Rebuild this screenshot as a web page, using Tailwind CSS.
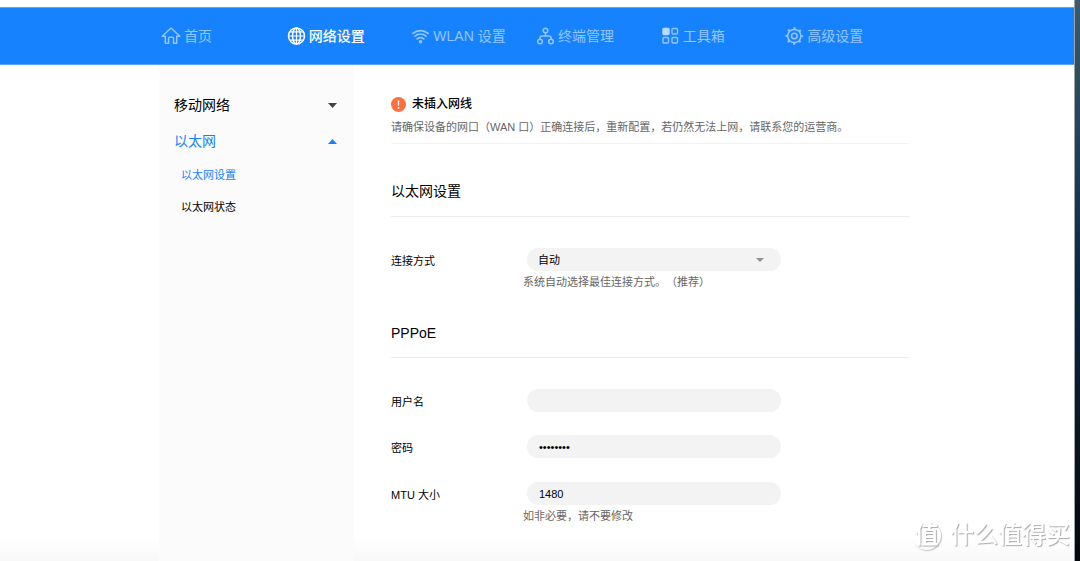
<!DOCTYPE html>
<html lang="zh-CN">
<head>
<meta charset="utf-8">
<meta name="viewport" content="width=device-width, initial-scale=1">
<title>以太网设置</title>
<script src="https://cdn.jsdelivr.net/npm/@tailwindcss/browser@4"></script>
</head>
<body class="flex min-h-screen bg-white font-['Liberation_Sans','Noto_Sans_CJK_SC',sans-serif] text-[11px] leading-4 text-black">
  <div class="flex min-w-0 grow flex-col bg-linear-to-t from-[#f8f8f8] to-white to-[24px] pt-[7px]">
    <header class="border-t border-b border-[#5ba4f8] bg-[#1782fd]">
      <nav aria-label="主导航" class="mx-auto grid h-14 max-w-[756px] grid-cols-6 items-center pr-[6px] pl-[2px] text-sm leading-5 whitespace-nowrap text-[#94c6ff]">
        <a href="#" class="flex items-center gap-[3px]">
          <svg class="size-5 shrink-0" viewBox="0 0 20 20" fill="none" stroke="currentColor" stroke-width="1.5" stroke-linejoin="round" stroke-linecap="round" aria-hidden="true"><path d="M4.3 10.2H1.2L10 2l8.8 8.2h-3.1v7.1h-3.2v-5.1c0-.7-.4-1-1-1H8.600c-.6 0-1 .3-1 1v5.100H4.300z"/></svg>
          首页</a>
        <a href="#" aria-current="page" class="flex items-center gap-[3px] font-medium text-white">
          <svg class="size-5 shrink-0" viewBox="0 0 20 20" fill="none" stroke="currentColor" stroke-width="1.5" aria-hidden="true"><circle cx="10.500" cy="10" r="8"/><ellipse cx="10.500" cy="10" rx="4" ry="8"/><path d="M10.500 2v16M2.500 10h16M3.800 5.800h13.400M3.800 14.200h13.400" stroke-width="1.200"/></svg>
          网络设置</a>
        <a href="#" class="flex items-center gap-[3px]">
          <svg class="size-5 shrink-0" viewBox="0 0 20 20" fill="none" stroke="currentColor" stroke-width="1.700" stroke-linecap="round" aria-hidden="true"><path d="M2.900 7.400c4.500-3.800 10.700-3.800 15.200 0M5 10.200c3.300-2.800 7.700-2.800 11 0M7.200 12.900c2.100-1.600 4.500-1.600 6.600 0"/><circle cx="10.500" cy="15.700" r="1.800" fill="currentColor" stroke="none"/></svg>
          WLAN 设置</a>
        <a href="#" class="flex items-center gap-[3px]">
          <svg class="size-5 shrink-0" viewBox="0 0 20 20" fill="none" stroke="currentColor" stroke-width="1.500" aria-hidden="true"><circle cx="10.500" cy="4.500" r="2.300"/><circle cx="5" cy="15.500" r="2.300"/><circle cx="16" cy="15.500" r="2.300"/><path d="M10.500 6.900v3M5 13.100v-1.200c0-1.300.7-2 2-2h7c1.300 0 2 .7 2 2v1.200"/></svg>
          终端管理</a>
        <a href="#" class="flex items-center gap-[3px]">
          <svg class="size-5 shrink-0" viewBox="0 0 20 20" fill="none" stroke="currentColor" stroke-width="1.400" aria-hidden="true"><rect x="3" y="2.500" width="6" height="6" rx="1" fill="#b9daff" stroke="#b9daff"/><rect x="12" y="2.500" width="5.500" height="5.500" rx="1"/><rect x="3" y="11.500" width="5.500" height="5.500" rx="1"/><rect x="12" y="11.500" width="5.500" height="5.500" rx="1"/></svg>
          工具箱</a>
        <a href="#" class="flex items-center gap-[3px]">
          <svg class="size-5 shrink-0" viewBox="0 0 20 20" fill="none" stroke="currentColor" stroke-width="1.500" aria-hidden="true"><circle cx="10.300" cy="10" r="6.600"/><circle cx="10.300" cy="10" r="2.800"/><circle cx="10.300" cy="10" r="7.900" stroke-width="1.800" stroke-dasharray="2.200 4.004" stroke-dashoffset="1.100"/></svg>
          高级设置</a>
      </nav>
    </header>

    <div class="mx-auto flex w-full max-w-[756px] grow">
      <aside class="w-[195px] shrink-0 bg-[#fbfbfb] pt-[22px] pr-[17px] pl-[15px]">
        <button type="button" aria-expanded="false" class="flex h-9 w-full items-center justify-between text-sm leading-5">移动网络
          <svg class="h-[5px] w-[9px] text-[#444]" viewBox="0 0 9 5" fill="currentColor" aria-hidden="true"><path d="M0 0h9L4.500 5z"/></svg></button>
        <button type="button" aria-expanded="true" class="flex h-9 w-full items-center justify-between text-sm leading-5 text-[#1782fd]">以太网
          <svg class="h-[5px] w-[9px]" viewBox="0 0 9 5" fill="currentColor" aria-hidden="true"><path d="M0 5h9L4.500 0z"/></svg></button>
        <ul class="pl-[7px]">
          <li><a href="#" aria-current="page" class="flex h-8 items-center text-[#1782fd]">以太网设置</a></li>
          <li><a href="#" class="flex h-8 items-center">以太网状态</a></li>
        </ul>
      </aside>

      <main class="min-w-0 grow pt-[31px] pr-[6px] pb-8 pl-[37px]">
        <section class="border-b border-[#f3f3f3] pb-2">
          <p class="flex items-center gap-[6px] text-xs leading-[17px] font-medium">
            <svg class="size-[15px]" viewBox="0 0 15 15" aria-hidden="true"><circle cx="7.500" cy="7.500" r="7.500" fill="#fb7140"/><path d="M6.700 3.500h1.600l-.3 5.300h-1z" fill="#fff"/><circle cx="7.500" cy="10.900" r=".9" fill="#fff"/></svg>
            未插入网线</p>
          <p class="mt-[6px] text-[#666]">请确保设备的网口（WAN 口）正确连接后，重新配置，若仍然无法上网，请联系您的运营商。</p>
        </section>

        <form>
          <h2 class="border-b border-[#ececec] pt-[37px] pb-[15px] text-sm leading-5">以太网设置</h2>
          <div class="mt-[31px] flex items-start">
            <label for="mode" class="w-[132px] shrink-0 pt-[5px]">连接方式</label>
            <div>
              <div class="relative ml-1 w-[254px]">
                <select id="mode" class="block h-[23px] w-full appearance-none rounded-full bg-[#f3f3f3] px-[11px]"><option>自动</option></select>
                <svg class="pointer-events-none absolute top-[10px] right-[17px] h-1 w-2 text-[#909090]" viewBox="0 0 8 4" fill="currentColor" aria-hidden="true"><path d="M0 0h8L4 4z"/></svg>
              </div>
              <p class="mt-[3px] text-[#666] [text-spacing-trim:space-all]">系统自动选择最佳连接方式。（推荐）</p>
            </div>
          </div>

          <h2 class="mt-[33px] border-b border-[#ececec] pb-[14px] text-sm leading-5">PPPoE</h2>
          <div class="mt-[31px] flex items-start">
            <label for="user" class="w-[136px] shrink-0 pt-[5px]">用户名</label>
            <input id="user" type="text" class="h-[23px] w-[254px] rounded-full bg-[#f3f3f3] px-3">
          </div>
          <div class="mt-[23px] flex items-start">
            <label for="pass" class="w-[136px] shrink-0 pt-[5px]">密码</label>
            <input id="pass" type="password" value="password" class="h-[23px] w-[254px] rounded-full bg-[#f3f3f3] px-3">
          </div>
          <div class="mt-6 flex items-start">
            <label for="mtu" class="w-[132px] shrink-0 pt-[5px]">MTU 大小</label>
            <div>
              <input id="mtu" type="text" value="1480" class="ml-1 block h-[23px] w-[254px] rounded-full bg-[#f3f3f3] px-3">
              <p class="mt-[3px] text-[#666]">如非必要，请不要修改</p>
            </div>
          </div>
        </form>
      </main>
    </div>
  </div>

  <div class="w-[6px] shrink-0 border-l border-[#9aa4aa] bg-linear-to-b from-[#3d5a6c] via-[#0c2940] to-[#05080c]"></div>

  <!-- watermark -->
  <div class="pointer-events-none fixed right-[10px] bottom-[10px] flex items-center gap-[9px] text-2xl leading-8 text-white [text-shadow:1px_1px_1px_#aaa]">
    <span class="flex size-[29px] items-center justify-center rounded-full font-bold shadow-[1px_1px_1px_#c4c4c4]">值</span>
    <span class="font-medium">什么值得买</span>
  </div>
</body>
</html>
